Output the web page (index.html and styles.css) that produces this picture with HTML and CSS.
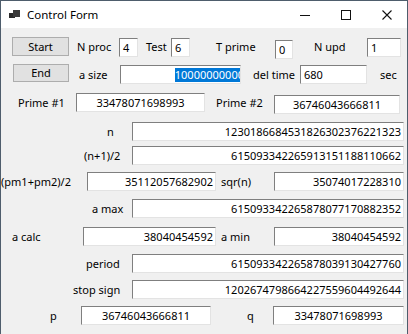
FILE: index.html
```html
<!DOCTYPE html>
<html>
<head>
<meta charset="utf-8">
<link rel="stylesheet" href="styles.css">
</head>
<body>
<div class="window">
  <div class="titlebar">
    <svg class="appicon" width="11" height="9" viewBox="0 0 11 9">
      <rect x="4" y="0" width="7" height="7" fill="#3b3b3b"/>
      <rect x="0" y="3" width="4" height="5" fill="#2b2b2b"/>
      <rect x="4" y="7" width="2" height="1" fill="#2b2b2b"/>
    </svg>
    <span class="title">Control Form</span>
    <span class="spacer"></span>
    <span class="cap"><svg width="10" height="10" viewBox="0 0 10 10"><line x1="0" y1="5.5" x2="10" y2="5.5" stroke="#111" stroke-width="1"/></svg></span>
    <span class="cap"><svg width="10" height="10" viewBox="0 0 10 10"><rect x="0.5" y="0.5" width="9" height="9" fill="none" stroke="#111" stroke-width="1"/></svg></span>
    <span class="cap"><svg width="10" height="10" viewBox="0 0 10 10"><path d="M0.5 0.5 L9.5 9.5 M9.5 0.5 L0.5 9.5" stroke="#111" stroke-width="1.1"/></svg></span>
  </div>
  <div class="client">
    <div class="row r1">
      <div class="btn b-start">Start</div>
      <div class="lbl l-nproc">N proc</div>
      <div class="tb t-nproc">4</div>
      <div class="lbl l-test">Test</div>
      <div class="tb t-test">6</div>
      <div class="lbl l-tprime">T prime</div>
      <div class="tb t-tprime">0</div>
      <div class="lbl l-nupd">N upd</div>
      <div class="tb t-nupd">1</div>
    </div>
    <div class="row r2">
      <div class="btn b-end">End</div>
      <div class="lbl l-asize">a size</div>
      <div class="tb t-asize"><span class="sel">10000000000</span></div>
      <div class="lbl l-del">del time</div>
      <div class="tb t-del">680</div>
      <div class="lbl l-sec">sec</div>
    </div>
    <div class="row r3">
      <div class="lbl l-p1">Prime #1</div>
      <div class="tb c t-p1">33478071698993</div>
      <div class="lbl l-p2">Prime #2</div>
      <div class="tb c t-p2">36746043666811</div>
    </div>
    <div class="row r4">
      <div class="lbl l-n">n</div>
      <div class="tb r wide">1230186684531826302376221323</div>
    </div>
    <div class="row r5">
      <div class="lbl l-n12">(n+1)/2</div>
      <div class="tb r wide">615093342265913151188110662</div>
    </div>
    <div class="row r6">
      <div class="lbl l-pm">(pm1+pm2)/2</div>
      <div class="tb r t-pm">35112057682902</div>
      <div class="lbl l-sqr">sqr(n)</div>
      <div class="tb r t-right">35074017228310</div>
    </div>
    <div class="row r7">
      <div class="lbl l-amax">a max</div>
      <div class="tb r wide">615093342265878077170882352</div>
    </div>
    <div class="row r8">
      <div class="lbl l-acalc">a calc</div>
      <div class="tb r t-acalc">38040454592</div>
      <div class="lbl l-amin">a min</div>
      <div class="tb r t-right">38040454592</div>
    </div>
    <div class="row r9">
      <div class="lbl l-period">period</div>
      <div class="tb r wide">615093342265878039130427760</div>
    </div>
    <div class="row r10">
      <div class="lbl l-stop">stop sign</div>
      <div class="tb r wide">1202674798664227559604492644</div>
    </div>
    <div class="row r11">
      <div class="lbl l-p">p</div>
      <div class="tb c t-p">36746043666811</div>
      <div class="lbl l-q">q</div>
      <div class="tb c t-q">33478071698993</div>
    </div>
  </div>
</div>
</body>
</html>
```

FILE: styles.css
```css
html, body {
  margin: 0;
  padding: 0;
  background: #f0f0f0;
}
.window {
  width: 408px;
  height: 334px;
  box-sizing: border-box;
  border: 1px solid #4e5d6c;
  border-bottom: none;
  background: #f0f0f0;
  font-family: "Noto Sans", "Open Sans", sans-serif;
  font-size: 11px;
  color: #000;
  overflow: hidden;
}
.titlebar {
  height: 27px;
  background: #fff;
  display: flex;
  align-items: center;
}
.appicon {
  margin-left: 8px;
  margin-top: -1px;
  flex-shrink: 0;
}
.title {
  margin-left: 7px;
  font-size: 11.5px;
  line-height: 27px;
}
.spacer { flex: 1; }
.cap {
  width: 41px;
  height: 27px;
  display: flex;
  align-items: center;
  justify-content: center;
}
.cap svg { display: block; }

.client { display: block; }
.row {
  display: flex;
  align-items: flex-start;
  height: 19px;
}
.r1 { margin-top: 9px; }
.r2 { margin-top: 8px; }
.r3 { margin-top: 10px; }
.r4 { margin-top: 10px; }
.r5 { margin-top: 5px; }
.r6 { margin-top: 7px; }
.r7 { margin-top: 8px; }
.r8 { margin-top: 9px; }
.r9 { margin-top: 8px; }
.r10 { margin-top: 7px; }
.r11 { margin-top: 7px; }

.btn {
  box-sizing: border-box;
  height: 19px;
  background: #e1e1e1;
  border: 1px solid #adadad;
  text-align: center;
  line-height: 17px;
  flex-shrink: 0;
}
.lbl {
  line-height: 19px;
  white-space: nowrap;
  flex-shrink: 0;
}
.tb {
  box-sizing: border-box;
  height: 19px;
  background: #fff;
  border: 1px solid;
  border-color: #7f7f7f #e3e3e3 #e3e3e3 #7f7f7f;
  line-height: 17px;
  padding: 0 2px 0 3px;
  white-space: nowrap;
  overflow: hidden;
  flex-shrink: 0;
}
.tb.r { text-align: right; }
.tb.c { text-align: center; padding: 0; }

/* row 1 */
.b-start { margin-left: 11px; width: 57px; }
.l-nproc { margin-left: 8px; width: 42px; }
.t-nproc { width: 19px; margin-top: 1px; }
.l-test { margin-left: 8px; width: 25px; }
.t-test { width: 19px; margin-top: 1px; }
.l-tprime { margin-left: 26px; width: 59px; }
.t-tprime { width: 18px; margin-top: 3px; }
.l-nupd { margin-left: 21px; width: 53px; }
.t-nupd { width: 34px; margin-top: 1px; }

/* row 2 */
.b-end { margin-left: 12px; width: 56px; height: 18px; line-height: 16px; }
.l-asize { margin-left: 10px; width: 41px; margin-top: 1px; }
.t-asize {
  width: 121px;
  margin-top: 1px;
  display: flex;
  justify-content: flex-end;
  align-items: center;
  padding: 0;
}
.sel {
  flex-shrink: 0;
  background: #0078d7;
  color: #fff;
  line-height: 14px;
  margin-right: -4px;
}
.l-del { margin-left: 12px; width: 47px; margin-top: 1px; }
.t-del { width: 67px; margin-top: 1px; }
.l-sec { margin-left: 13px; margin-top: 1px; }

/* row 3 */
.l-p1 { margin-left: 17px; width: 58px; }
.t-p1 { width: 129px; }
.l-p2 { margin-left: 11px; width: 58px; }
.t-p2 { width: 126px; margin-top: 2px; }

/* long rows */
.wide { width: 272px; }
.l-n { margin-left: 106px; width: 25px; }
.l-n12 { margin-left: 83px; width: 48px; }
.l-amax { margin-left: 91px; width: 40px; }
.l-period { margin-left: 85px; width: 46px; }
.l-stop { margin-left: 72px; width: 59px; }

/* row 6 / 8 */
.l-pm { margin-left: 0; width: 86px; }
.t-pm { width: 129px; }
.l-sqr { margin-left: 5px; width: 53px; }
.t-right { width: 130px; }
.l-acalc { margin-left: 11px; width: 71px; }
.t-acalc { width: 133px; }
.l-amin { margin-left: 5px; width: 53px; }

/* row 11 */
.l-p { margin-left: 49px; width: 31px; }
.t-p { width: 130px; }
.l-q { margin-left: 36px; width: 26px; }
.t-q { width: 131px; }
```
